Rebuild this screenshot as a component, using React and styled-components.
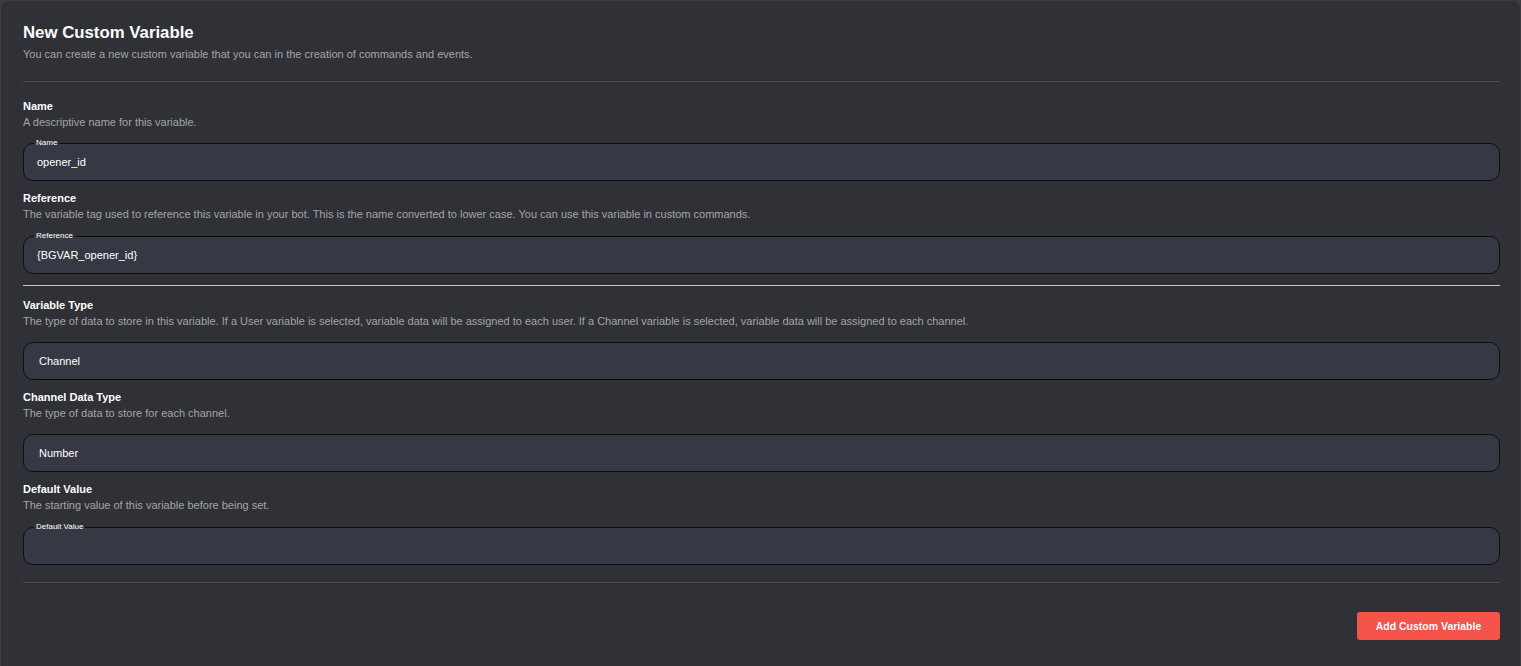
import styled, { createGlobalStyle } from "styled-components";

const GlobalStyle = createGlobalStyle`
  html, body {
    margin: 0;
    padding: 0;
    background: #3a3c42;
    font-family: "Liberation Sans", Arial, sans-serif;
    overflow: hidden;
  }
`;

const Card = styled.div`
  margin: 1px 1px 0 1px;
  height: 665px;
  background: #303136;
  border-radius: 8px 8px 0 0;
  padding: 21px 20px 0 22px;
  box-sizing: border-box;
  color: #fff;
`;

const Title = styled.h1`
  margin: 0;
  font-size: 16.8px;
  line-height: 22px;
  font-weight: 700;
  color: #fff;
`;

const Subtitle = styled.p`
  margin: 2px 0 0;
  font-size: 11px;
  line-height: 16px;
  color: #a3a4a8;
`;

const Divider = styled.hr`
  border: 0;
  height: 1px;
  margin: ${(p) => p.$margin || "0"};
  background: ${(p) => (p.$light ? "#c4c5c8" : "#4c4d52")};
`;

const Section = styled.div`
  display: flex;
  flex-direction: column;
  margin-top: ${(p) => (p.$first ? 0 : 10)}px;
`;

const Label = styled.div`
  font-size: 11px;
  line-height: 14px;
  font-weight: 700;
  color: #fff;
`;

const Help = styled.div`
  margin-top: 2px;
  font-size: 11px;
  line-height: 14px;
  color: #a3a4a8;
`;

const Field = styled.div`
  position: relative;
  margin-top: ${(p) => p.$gap}px;
  height: 38px;
  background: #363943;
  border: 1px solid #0d0e10;
  border-radius: 10px;
  box-sizing: border-box;
  display: flex;
  align-items: center;
  padding-left: ${(p) => p.$pad}px;
  font-size: 11px;
  color: #fff;
`;

const FloatLabel = styled.span`
  position: absolute;
  top: -6px;
  left: 10px;
  padding: 0 2px;
  background: linear-gradient(#303136 50%, #363943 50%);
  font-size: 8px;
  line-height: 10px;
  color: #fff;
`;

const Footer = styled.div`
  display: flex;
  justify-content: flex-end;
  padding-top: 29px;
`;

const Button = styled.button`
  width: 143px;
  height: 28px;
  border: 0;
  border-radius: 3px;
  background: #f4544a;
  color: #fff;
  font-family: inherit;
  font-size: 10.5px;
  font-weight: 700;
  cursor: pointer;
`;

const fields = [
  {
    label: "Name",
    help: "A descriptive name for this variable.",
    float: "Name",
    value: "opener_id",
    gap: 14,
  },
  {
    label: "Reference",
    help: "The variable tag used to reference this variable in your bot. This is the name converted to lower case. You can use this variable in custom commands.",
    float: "Reference",
    value: "{BGVAR_opener_id}",
    gap: 15,
  },
];

const fields2 = [
  {
    label: "Variable Type",
    help: "The type of data to store in this variable. If a User variable is selected, variable data will be assigned to each user. If a Channel variable is selected, variable data will be assigned to each channel.",
    value: "Channel",
    gap: 14,
  },
  {
    label: "Channel Data Type",
    help: "The type of data to store for each channel.",
    value: "Number",
    gap: 14,
  },
  {
    label: "Default Value",
    help: "The starting value of this variable before being set.",
    float: "Default Value",
    value: "",
    gap: 15,
  },
];

const FormRow = ({ label, help, float, value, gap, first }) => (
  <Section $first={first}>
    <Label>{label}</Label>
    <Help>{help}</Help>
    <Field $gap={gap} $pad={float ? 13 : 15}>
      {float && <FloatLabel>{float}</FloatLabel>}
      {value}
    </Field>
  </Section>
);

export default function App() {
  return (
    <>
      <GlobalStyle />
      <Card>
        <Title>New Custom Variable</Title>
        <Subtitle>
          You can create a new custom variable that you can in the creation of commands and events.
        </Subtitle>
        <Divider $margin="19px 0 17px" />
        {fields.map((f, i) => (
          <FormRow key={f.label} {...f} first={i === 0} />
        ))}
        <Divider $light $margin="11px 0 12px" />
        {fields2.map((f, i) => (
          <FormRow key={f.label} {...f} first={i === 0} />
        ))}
        <Divider $margin="17px 0 0" />
        <Footer>
          <Button>Add Custom Variable</Button>
        </Footer>
      </Card>
    </>
  );
}
